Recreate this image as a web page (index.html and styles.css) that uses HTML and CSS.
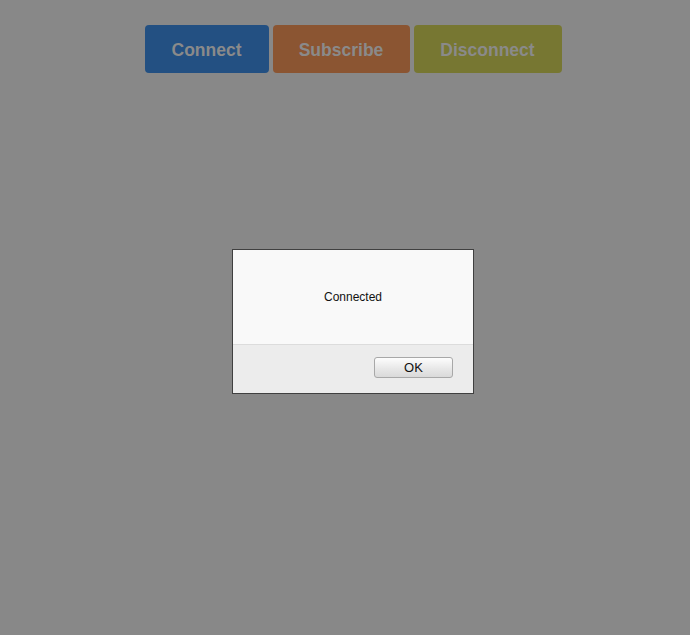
FILE: index.html
```html
<!DOCTYPE html>
<html>
<head>
<meta charset="utf-8">
<link rel="stylesheet" href="styles.css">
</head>
<body>
<div class="toolbar">
  <button class="btn btn-connect">Connect</button>
  <button class="btn btn-subscribe">Subscribe</button>
  <button class="btn btn-disconnect">Disconnect</button>
</div>
<div class="dialog">
  <div class="dialog-body">Connected</div>
  <div class="dialog-footer"><button class="ok">OK</button></div>
</div>
</body>
</html>
```
FILE: styles.css
```css
html, body {
  margin: 0;
  height: 100%;
  background: #888888;
  font-family: "Liberation Sans", Arial, sans-serif;
}
.toolbar {
  display: flex;
  justify-content: center;
  gap: 4px;
  padding: 25px 0 0 16px;
}
.btn {
  height: 48px;
  border: none;
  border-radius: 4px;
  padding: 2px 0 0;
  font-family: "Liberation Sans", Arial, sans-serif;
  font-weight: bold;
  font-size: 17.5px;
  color: #8a8a8a;
}
.btn-connect { background: #235082; width: 124px; }
.btn-subscribe { background: #8b5532; width: 137px; }
.btn-disconnect { background: #777732; width: 148px; }
.dialog {
  position: absolute;
  left: 232px;
  top: 249px;
  width: 240px;
  border: 1px solid #404040;
  background: #f9f9f9;
  display: flex;
  flex-direction: column;
}
.dialog-body {
  height: 94px;
  display: flex;
  align-items: center;
  justify-content: center;
  font-size: 12px;
  color: #111;
  border-bottom: 1px solid #dcdcdc;
}
.dialog-footer {
  height: 48px;
  background: #ececec;
  display: flex;
  justify-content: flex-end;
  align-items: flex-start;
  padding: 12px 20px 0 0;
  box-sizing: border-box;
}
.ok {
  width: 79px;
  height: 21px;
  border: 1px solid #a8a8a8;
  border-radius: 3px;
  background: linear-gradient(#fdfdfd, #e6e6e6 60%, #dadada);
  font-family: "Liberation Sans", Arial, sans-serif;
  font-size: 13px;
  color: #111;
  padding: 0;
}
```
